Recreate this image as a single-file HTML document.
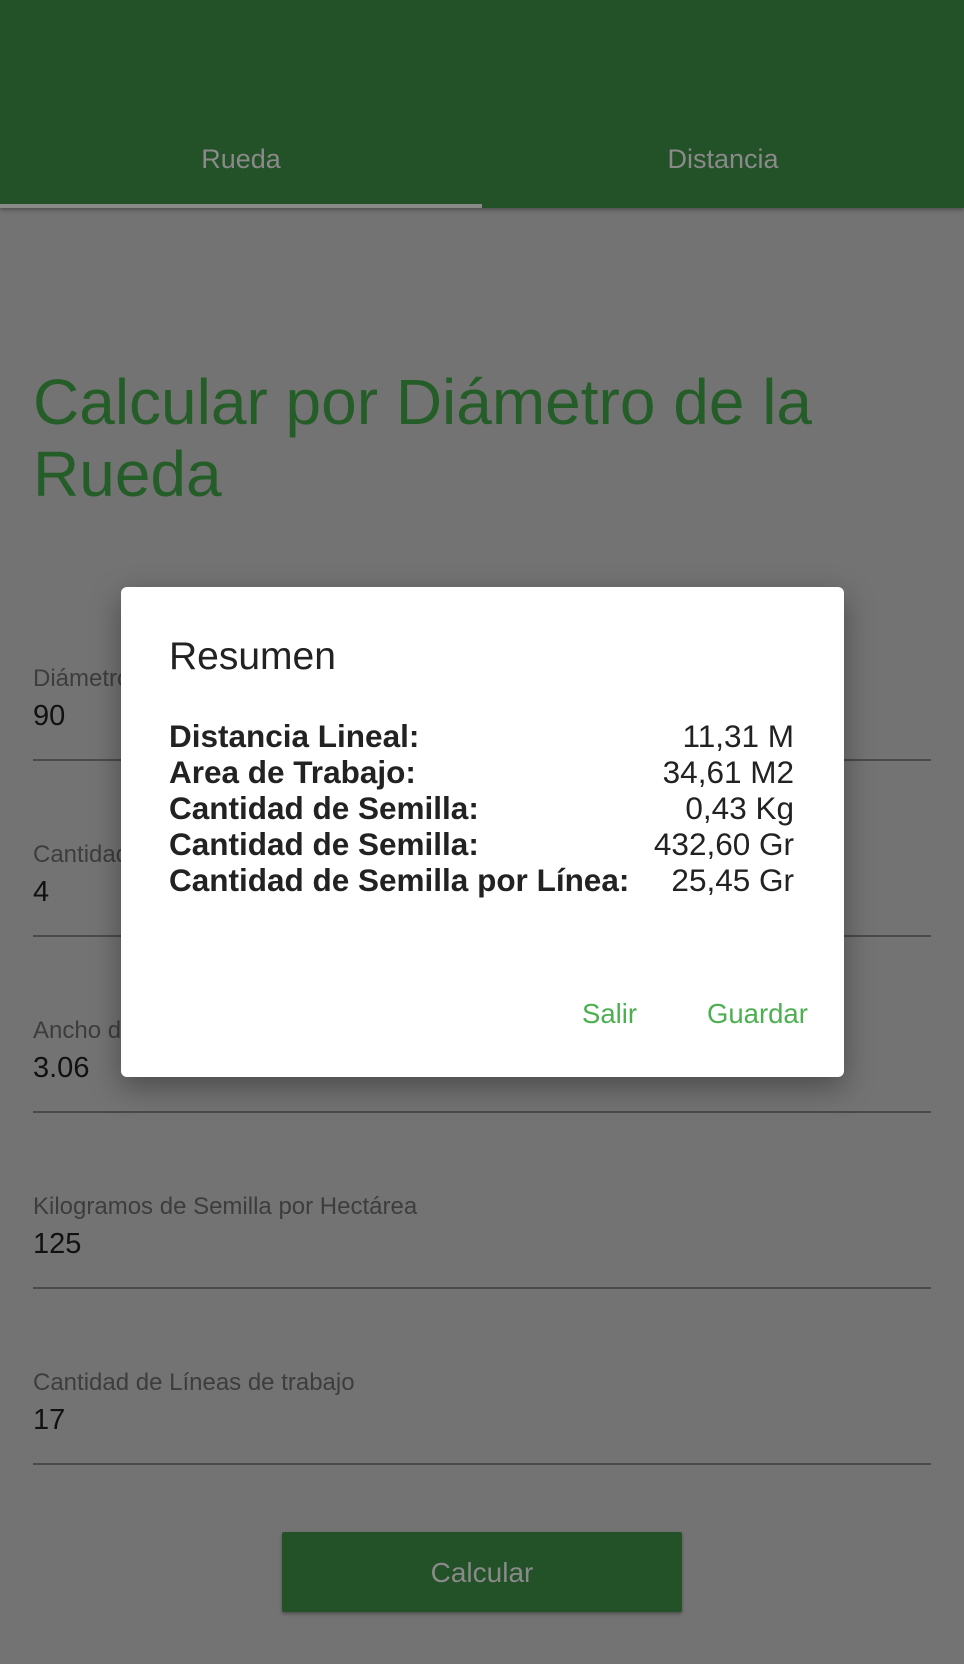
<!DOCTYPE html>
<html><head><meta charset="utf-8"><style>
*{margin:0;padding:0;box-sizing:border-box}
html,body{width:964px;height:1664px;overflow:hidden;background:#737373;font-family:"Liberation Sans",sans-serif}
.a{position:absolute;line-height:1;white-space:nowrap}
.hdr{position:absolute;left:0;top:0;width:964px;height:208px;background:#235128;box-shadow:0 2px 4px rgba(0,0,0,.3)}
.tab{color:#8a8a8a;font-size:27px;text-align:center;width:482px}
.ul{position:absolute;left:0;top:204px;width:482px;height:4px;background:#8a8a8a}
.lbl{font-size:24px;color:#3d3d3d;left:33px}
.val{font-size:29px;color:#111;left:33px}
.line{position:absolute;left:33px;width:898px;height:2px;background:#4a4a4a}
.dlg{position:absolute;left:121px;top:587px;width:723px;height:490px;background:#fff;border-radius:6px;box-shadow:0 10px 30px rgba(0,0,0,.35)}
.row{position:absolute;left:48px;width:625px;font-size:31.5px;line-height:36px;color:#222}
.row div{display:flex;justify-content:space-between}
.row b{font-weight:bold}
</style></head><body>
<div class="hdr"></div>
<div class="a tab" style="left:0;top:146px">Rueda</div>
<div class="a tab" style="left:482px;top:146px">Distancia</div>
<div class="ul"></div>
<div class="a" style="left:33px;top:366px;font-size:64px;line-height:72px;color:#255d28;white-space:normal;width:900px">Calcular por Diámetro de la Rueda</div>

<div class="a lbl" style="top:667px">Diámetro de la Rueda (cm)</div>
<div class="a val" style="top:702px">90</div>
<div class="line" style="top:759px"></div>
<div class="a lbl" style="top:843px">Cantidad de Surcos</div>
<div class="a val" style="top:878px">4</div>
<div class="line" style="top:935px"></div>
<div class="a lbl" style="top:1019px">Ancho de Trabajo</div>
<div class="a val" style="top:1054px">3.06</div>
<div class="line" style="top:1111px"></div>
<div class="a lbl" style="top:1195px">Kilogramos de Semilla por Hectárea</div>
<div class="a val" style="top:1230px">125</div>
<div class="line" style="top:1287px"></div>
<div class="a lbl" style="top:1371px">Cantidad de Líneas de trabajo</div>
<div class="a val" style="top:1406px">17</div>
<div class="line" style="top:1463px"></div>

<div style="position:absolute;left:282px;top:1532px;width:400px;height:80px;background:#235128;border-radius:2px;box-shadow:0 2px 3px rgba(0,0,0,.3)"></div>
<div class="a" style="left:282px;width:400px;text-align:center;top:1559px;font-size:28px;color:#8a8a8a">Calcular</div>

<div class="dlg">
<div class="a" style="left:48px;top:50px;font-size:39px;color:#222">Resumen</div>
<div class="row" style="top:131px">
<div><b>Distancia Lineal:</b><span>11,31 M</span></div>
<div><b>Area de Trabajo:</b><span>34,61 M2</span></div>
<div><b>Cantidad de Semilla:</b><span>0,43 Kg</span></div>
<div><b>Cantidad de Semilla:</b><span>432,60 Gr</span></div>
<div><b>Cantidad de Semilla por Línea:</b><span>25,45 Gr</span></div>
</div>
<div class="a" style="left:461px;top:413px;font-size:27.5px;color:#4caf50">Salir</div>
<div class="a" style="left:586px;top:413px;font-size:27.5px;color:#4caf50">Guardar</div>
</div>
</body></html>
